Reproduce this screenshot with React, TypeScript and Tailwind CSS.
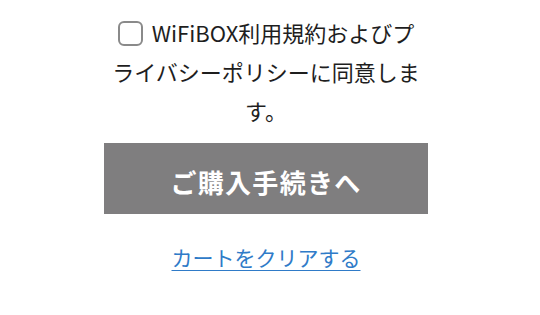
export default function App() {
  return (
    <div
      className="w-[540px] h-[315px] bg-white overflow-hidden"
      style={{ fontFamily: '"Noto Sans CJK JP", "Noto Sans", sans-serif' }}
    >
      <div className="ml-[104px] w-[324px] pt-[13px] flex flex-col">
        {/* Agreement */}
        <label className="block text-center text-[22px] leading-[39px] text-[#1e1e1e]">
          <span className="inline-block align-[-4px] w-[25px] h-[25px] mr-[9px] rounded-[6px] border-[2.5px] border-[#8a8a8a] bg-white" />
          WiFiBOX利用規約およびプ
          <br />
          ライバシーポリシーに同意しま
          <br />
          す。
        </label>

        {/* Submit */}
        <button className="mt-[13px] h-[71px] w-full bg-[#7f7e7f] text-white text-[26px] font-bold tracking-[1.3px] pt-[6px]">
          ご購入手続きへ
        </button>

        {/* Clear cart */}
        <div className="mt-[28px] text-center">
          <a className="text-[21px] leading-[30px] text-[#2f7bc8] underline underline-offset-[4px] decoration-1">
            カートをクリアする
          </a>
        </div>
      </div>
    </div>
  );
}
